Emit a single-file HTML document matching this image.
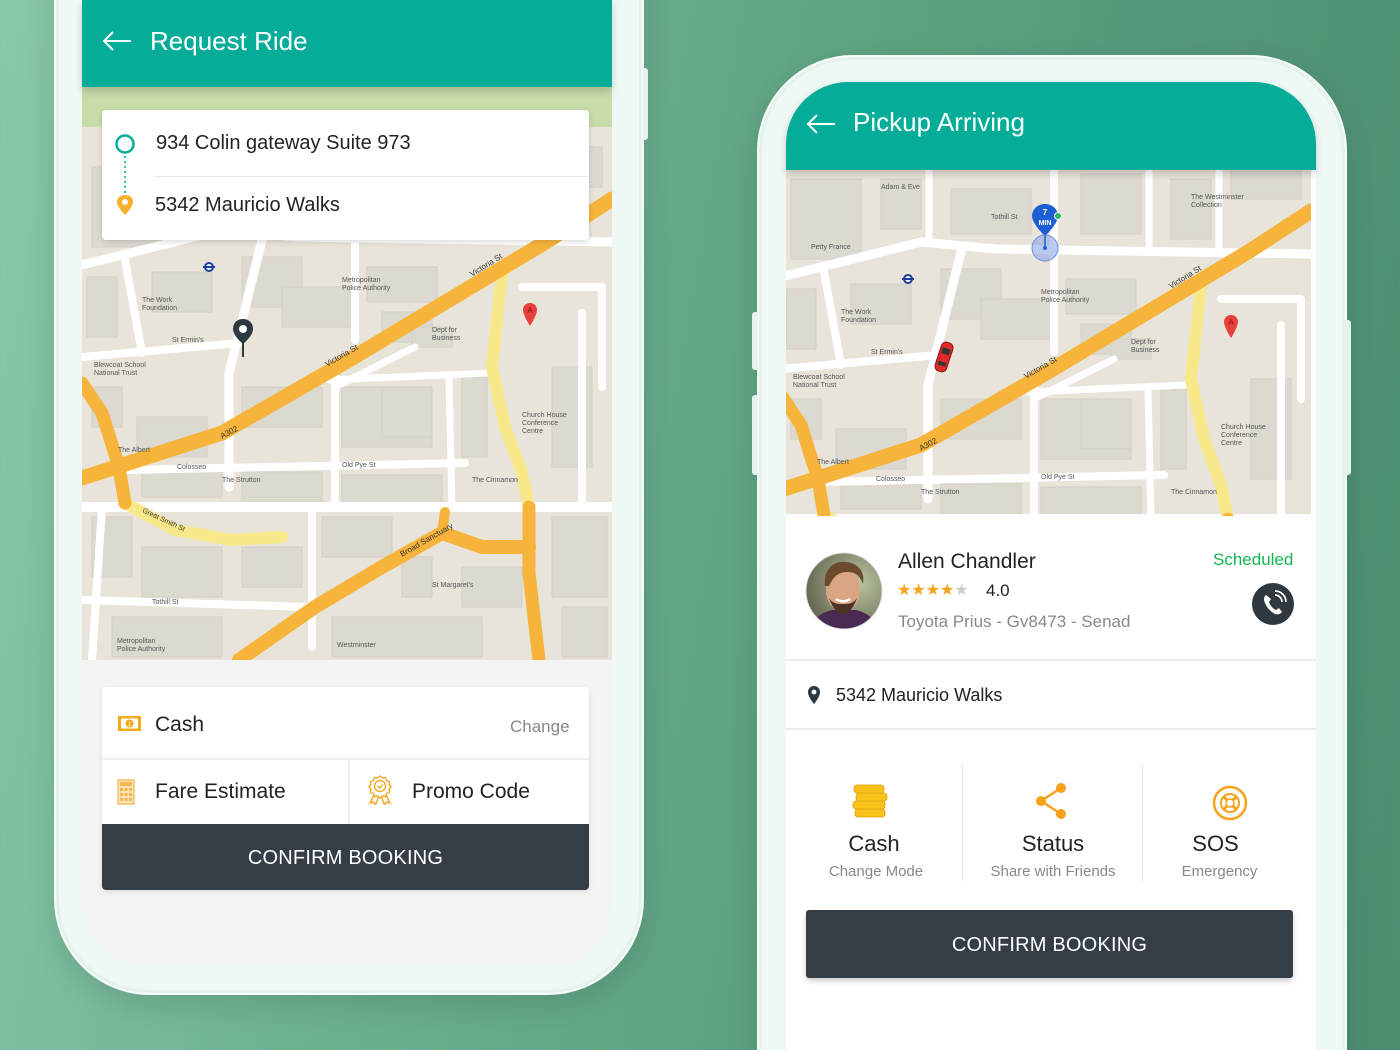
<!DOCTYPE html>
<html style="width:1400px;height:1050px;overflow:hidden"><head><meta charset="utf-8">
<style>
*{margin:0;padding:0;box-sizing:border-box}
html,body{width:1400px;height:1050px;overflow:hidden}
body{position:relative;font-family:"Liberation Sans",sans-serif;
background:linear-gradient(100deg,#8ac8ab 0%,#6db191 30%,#5ea383 55%,#54977a 75%,#4c8d70 100%);}
.abs{position:absolute}
.shell{position:absolute;background:#eef8f4;border:2px solid #f6fcf9;box-shadow:0 0 0 3px #e3f3ec inset,0 10px 30px rgba(0,0,0,.12)}
.hdr{position:absolute;background:#05ad99;color:#fff;font-size:26px;box-shadow:0 4px 8px rgba(0,0,0,.18)}
.t{position:absolute;white-space:nowrap}
.btn{position:absolute;background:#353e46;color:#fff;font-size:20px;text-align:center;letter-spacing:.2px}
</style></head><body>

<svg width="0" height="0" style="position:absolute">
<defs>
<symbol id="map" viewBox="0 0 530 573">
<rect width="530" height="573" fill="#e8e4da"/>
<rect width="530" height="40" fill="#c8dcaa"/>
<g fill="#dcd9d1" stroke="#d2cec6" stroke-width="1">
<rect x="5" y="190" width="30" height="60"/><rect x="70" y="185" width="60" height="40"/><rect x="160" y="170" width="60" height="50"/>
<rect x="200" y="200" width="70" height="40"/><rect x="285" y="180" width="70" height="35"/><rect x="300" y="225" width="50" height="30"/>
<rect x="10" y="300" width="30" height="40"/><rect x="55" y="330" width="70" height="40"/><rect x="160" y="300" width="80" height="40"/>
<rect x="260" y="300" width="90" height="60"/><rect x="380" y="290" width="25" height="80"/><rect x="470" y="280" width="40" height="100"/>
<rect x="60" y="385" width="80" height="25"/><rect x="160" y="385" width="80" height="30"/><rect x="260" y="388" width="100" height="28"/>
<rect x="10" y="430" width="40" height="60"/><rect x="60" y="460" width="80" height="50"/><rect x="160" y="460" width="60" height="40"/>
<rect x="240" y="430" width="70" height="40"/><rect x="320" y="470" width="30" height="40"/><rect x="380" y="480" width="60" height="40"/>
<rect x="470" y="430" width="55" height="80"/><rect x="30" y="530" width="110" height="40"/><rect x="250" y="530" width="150" height="40"/>
<rect x="480" y="520" width="45" height="50"/><rect x="100" y="80" width="40" height="50"/><rect x="170" y="90" width="80" height="45"/>
<rect x="300" y="75" width="60" height="60"/><rect x="390" y="80" width="40" height="60"/><rect x="450" y="60" width="70" height="40"/>
<rect x="10" y="80" width="70" height="80"/><rect x="300" y="300" width="50" height="50"/><rect x="330" y="240" width="40" height="20"/>
</g>
<g fill="none" stroke="#fff" stroke-linecap="round" stroke-linejoin="round">
<path d="M0 420H530" stroke-width="10"/>
<path d="M43 383L383 376" stroke-width="8"/>
<path d="M180 153L147 286L147 400" stroke-width="9"/>
<path d="M0 270L157 256" stroke-width="8"/>
<path d="M253 280L253 420" stroke-width="8"/>
<path d="M43 173L60 266" stroke-width="8"/>
<path d="M253 300L333 260" stroke-width="7"/>
<path d="M367 293L370 420" stroke-width="7"/>
<path d="M247 293L407 286" stroke-width="7"/>
<path d="M500 226L500 413" stroke-width="8"/>
<path d="M0 513L227 520" stroke-width="8"/>
<path d="M230 420L230 560" stroke-width="8"/>
<path d="M20 420L10 573" stroke-width="8"/>
<path d="M273 71L273 253" stroke-width="8"/>
<path d="M0 178L140 143L215 150L530 155" stroke-width="9"/>
<path d="M148 71L148 140" stroke-width="7"/><path d="M368 71L368 150" stroke-width="7"/><path d="M438 71L438 155" stroke-width="7"/>
<path d="M440 200L520 200L520 300" stroke-width="8"/>
</g>
<g fill="none" stroke-linecap="round" stroke-linejoin="round">
<path d="M43 416L93 443L150 453L200 450" stroke="#f7e98a" stroke-width="12"/>
<path d="M420 186L410 280L423 340L440 386L447 420" stroke="#f7e98a" stroke-width="12"/>
<path d="M0 296L20 326L37 380L43 416" stroke="#f6b43a" stroke-width="13"/>
<path d="M0 391L140 346L267 273L367 213L467 153L530 112" stroke="#f6b43a" stroke-width="15"/>
<path d="M447 420L447 486L457 573" stroke="#f6b43a" stroke-width="13"/>
<path d="M157 573L233 520L300 480L360 446L400 460L447 460" stroke="#f6b43a" stroke-width="14"/>
<path d="M360 446L363 425" stroke="#f6b43a" stroke-width="10"/>
</g>
<g font-family="Liberation Sans,sans-serif" font-size="7" fill="#555">
<text x="245" y="280" transform="rotate(-30 245 280)" font-size="8" fill="#333">Victoria St</text>
<text x="140" y="352" transform="rotate(-28 140 352)" font-size="8" fill="#333">A302</text>
<text x="390" y="190" transform="rotate(-32 390 190)" font-size="8" fill="#333">Victoria St</text>
<text x="260" y="380">Old Pye St</text><text x="60" y="215">The Work</text><text x="60" y="223">Foundation</text>
<text x="90" y="255">St Ermin's</text><text x="12" y="280">Blewcoat School</text><text x="12" y="288">National Trust</text>
<text x="260" y="195">Metropolitan</text><text x="260" y="203">Police Authority</text><text x="350" y="245">Dept for</text><text x="350" y="253">Business</text>
<text x="440" y="330">Church House</text><text x="440" y="338">Conference</text><text x="440" y="346">Centre</text>
<text x="390" y="395">The Cinnamon</text><text x="36" y="365">The Albert</text><text x="95" y="382">Colosseo</text>
<text x="140" y="395">The Strutton</text><text x="70" y="517">Tothill St</text><text x="350" y="500">St Margaret's</text>
<text x="35" y="556">Metropolitan</text><text x="35" y="564">Police Authority</text><text x="255" y="560">Westminster</text>
<text x="320" y="470" transform="rotate(-30 320 470)" font-size="8" fill="#333">Broad Sanctuary</text>
<text x="60" y="425" transform="rotate(25 60 425)" fill="#333">Great Smith St</text>
<text x="100" y="90">Adam &amp; Eve</text><text x="30" y="150">Petty France</text><text x="210" y="120">Tothill St</text>
<text x="410" y="100">The Westminster</text><text x="410" y="108">Collection</text>
</g>
<circle cx="127" cy="180" r="4" fill="#fff" stroke="#1b3fa0" stroke-width="2"/><path d="M121 180h12" stroke="#1b3fa0" stroke-width="2"/>
</symbol>
</defs>
</svg>

<!-- LEFT PHONE -->
<div class="shell" style="left:54px;top:-120px;width:590px;height:1115px;border-radius:0 0 96px 96px"></div>
<div class="abs" style="left:643px;top:68px;width:5px;height:72px;background:#e6f4ee;border-radius:0 3px 3px 0"></div>
<div class="abs" style="left:82px;top:-10px;width:530px;height:975px;background:#f4f4f4;border-radius:0 0 62px 62px;overflow:hidden">
  <svg class="abs" style="left:0;top:97px" width="530" height="573"><use href="#map"/></svg>
  <svg class="abs" style="left:150px;top:328px" width="22" height="40" viewBox="0 0 22 40"><path d="M11 1C5 1 1 5 1 11c0 7 10 15 10 15s10-8 10-15C21 5 17 1 11 1z" fill="#2c3a40"/><circle cx="11" cy="11" r="4" fill="#fff"/><path d="M11 25v14" stroke="#2c3a40" stroke-width="2"/></svg>
  <svg class="abs" style="left:440px;top:312px" width="16" height="26" viewBox="0 0 16 26"><path d="M8 1C4 1 1 4 1 8c0 5 7 16 7 16s7-11 7-16c0-4-3-7-7-7z" fill="#e8403a"/><text x="8" y="11" font-size="8" text-anchor="middle" fill="#7a1010" font-family="Liberation Sans">A</text></svg>
</div>
<div class="hdr" style="left:82px;top:0;width:530px;height:87px">
  <svg class="abs" style="left:20px;top:31px" width="30" height="20" viewBox="0 0 30 20"><path d="M29 10H2M11 1L2 10l9 9" fill="none" stroke="#fff" stroke-width="2"/></svg>
  <div class="t" style="left:68px;top:26px">Request Ride</div>
</div>
<div class="abs" style="left:102px;top:110px;width:487px;height:130px;background:#fff;border-radius:4px;box-shadow:0 2px 6px rgba(0,0,0,.15)">
  <svg class="abs" style="left:12px;top:22px" width="24" height="88" viewBox="0 0 24 88"><circle cx="11" cy="12" r="8.5" fill="none" stroke="#06ae9a" stroke-width="2.5"/><path d="M11 24V62" stroke="#06ae9a" stroke-width="1.6" stroke-dasharray="2 3"/><path d="M11 63c-5 0-8 3-8 7 0 5 8 13 8 13s8-8 8-13c0-4-3-7-8-7z" fill="#f7b12c"/><circle cx="11" cy="70" r="3" fill="#fff"/></svg>
  <div class="t" style="left:54px;top:22px;font-size:20px;color:#222">934 Colin gateway Suite 973</div>
  <div class="abs" style="left:52px;top:66px;width:435px;height:1px;background:#e6e6e6"></div>
  <div class="t" style="left:53px;top:84px;font-size:20px;color:#222">5342 Mauricio Walks</div>
</div>
<div class="abs" style="left:102px;top:687px;width:487px;height:203px;background:#fff;border-radius:4px;box-shadow:0 2px 6px rgba(0,0,0,.1);overflow:hidden">
  <svg class="abs" style="left:15px;top:28px" width="25" height="17" viewBox="0 0 25 17"><rect x="1" y="1" width="23" height="15" fill="#f7a91c"/><rect x="4" y="3.5" width="17" height="10" fill="#fff" rx="1"/><circle cx="12.5" cy="8.5" r="4" fill="#f7a91c"/><text x="12.5" y="11" font-size="6" text-anchor="middle" fill="#fff" font-family="Liberation Sans">1</text></svg>
  <div class="t" style="left:53px;top:26px;font-size:21px;color:#222">Cash</div>
  <div class="t" style="left:408px;top:30px;font-size:17px;color:#888">Change</div>
  <div class="abs" style="left:0;top:71px;width:487px;height:2px;background:#efefef"></div>
  <svg class="abs" style="left:15px;top:92px" width="18" height="26" viewBox="0 0 18 26"><rect x="1" y="1" width="16" height="24" fill="#fbe3b4" stroke="#f4b650" stroke-width="1.2"/><rect x="3" y="3" width="12" height="4" fill="#f4b650"/><g fill="#f4b650"><rect x="3" y="9" width="3" height="3"/><rect x="7.5" y="9" width="3" height="3"/><rect x="12" y="9" width="3" height="3"/><rect x="3" y="14" width="3" height="3"/><rect x="7.5" y="14" width="3" height="3"/><rect x="12" y="14" width="3" height="3"/><rect x="3" y="19" width="3" height="3"/><rect x="7.5" y="19" width="3" height="3"/><rect x="12" y="19" width="3" height="3"/></g></svg>
  <div class="t" style="left:53px;top:93px;font-size:21px;color:#222">Fare Estimate</div>
  <div class="abs" style="left:246px;top:73px;width:2px;height:64px;background:#efefef"></div>
  <svg class="abs" style="left:265px;top:88px" width="26" height="30" viewBox="0 0 26 30"><g fill="none" stroke="#f5a623" stroke-width="1.4"><path d="M13 1l2.5 2 3-.5 1 3 3 1-.5 3 2 2.5-2 2.5.5 3-3 1-1 3-3-.5L13 23l-2.5-2-3 .5-1-3-3-1 .5-3-2-2.5 2-2.5-.5-3 3-1 1-3 3 .5z"/><circle cx="13" cy="11" r="5.5"/><path d="M10.5 11l2 2 3.5-3.5"/><path d="M7 20l-4 8 3.5-1 2 3 3-8M19 20l4 8-3.5-1-2 3-3-8"/></g></svg>
  <div class="t" style="left:310px;top:93px;font-size:21px;color:#222">Promo Code</div>
  <div class="btn" style="left:0;top:137px;width:487px;height:66px;line-height:68px">CONFIRM BOOKING</div>
</div>

<!-- RIGHT PHONE -->
<div class="shell" style="left:757px;top:55px;width:590px;height:1040px;border-radius:96px 96px 0 0"></div>
<div class="abs" style="left:752px;top:312px;width:6px;height:58px;background:#e6f4ee;border-radius:3px 0 0 3px"></div>
<div class="abs" style="left:752px;top:395px;width:6px;height:80px;background:#e6f4ee;border-radius:3px 0 0 3px"></div>
<div class="abs" style="left:1345px;top:320px;width:6px;height:155px;background:#e6f4ee;border-radius:0 3px 3px 0"></div>
<div class="abs" style="left:786px;top:82px;width:530px;height:1000px;background:#fff;border-radius:62px 62px 0 0;overflow:hidden">
  <svg class="abs" style="left:0;top:88px" width="530" height="346" viewBox="5 71 530 346" preserveAspectRatio="none"><use href="#map" width="530" height="573"/></svg>
  <svg class="abs" style="left:240px;top:120px" width="40" height="66" viewBox="0 0 40 66"><circle cx="19" cy="46" r="13" fill="#8aa6e6" fill-opacity=".6" stroke="#6f8fdc"/><path d="M19 2C12 2 6 7 6 14c0 8 13 20 13 20s13-12 13-20C32 7 26 2 19 2z" fill="#1e5fd6"/><text x="19" y="13" font-size="8" text-anchor="middle" fill="#fff" font-family="Liberation Sans" font-weight="bold">7</text><text x="19" y="23" font-size="7" text-anchor="middle" fill="#fff" font-family="Liberation Sans" font-weight="bold">MIN</text><path d="M19 34v12" stroke="#1e5fd6" stroke-width="1.5"/><circle cx="19" cy="46" r="2" fill="#1e5fd6"/><circle cx="32" cy="14" r="3.5" fill="#2db36a" stroke="#fff"/></svg>
  <svg class="abs" style="left:148px;top:258px" width="20" height="34" viewBox="0 0 20 34"><g transform="rotate(18 10 17)"><rect x="4" y="2" width="12" height="30" rx="5" fill="#e02a2a" stroke="#8a1010"/><rect x="6" y="8" width="8" height="6" fill="#333"/><rect x="6" y="22" width="8" height="4" fill="#333"/></g></svg>
  <svg class="abs" style="left:437px;top:232px" width="16" height="26" viewBox="0 0 16 26"><path d="M8 1C4 1 1 4 1 8c0 5 7 16 7 16s7-11 7-16c0-4-3-7-7-7z" fill="#e8403a"/><text x="8" y="11" font-size="8" text-anchor="middle" fill="#7a1010" font-family="Liberation Sans">A</text></svg>

  <svg class="abs" style="left:19px;top:470px" width="78" height="78" viewBox="0 0 78 78"><defs><clipPath id="cc"><circle cx="39" cy="39" r="38"/></clipPath><radialGradient id="bg1" cx=".7" cy=".4" r=".8"><stop offset="0" stop-color="#b8c4a0"/><stop offset="1" stop-color="#5c5a48"/></radialGradient></defs><g clip-path="url(#cc)"><rect width="78" height="78" fill="url(#bg1)"/><path d="M5 78c4-14 14-18 22-20h24c8 2 18 6 22 20z" fill="#4a2a52"/><ellipse cx="38" cy="38" rx="17" ry="22" fill="#d9a582"/><path d="M20 34c-2-18 10-26 22-24 12 2 18 10 16 22-3-8-7-12-16-12-10 0-14 6-18 14z" fill="#6b4a2e"/><path d="M24 46c4 12 10 16 14 16s10-4 14-16c-4 6-8 6-14 6s-10 0-14-6z" fill="#4b3222"/><path d="M31 47c4 3 10 3 14 0" stroke="#fff" stroke-width="2.5" fill="none"/></g><circle cx="39" cy="39" r="38" fill="none" stroke="#ddd"/></svg>
  <div class="t" style="left:112px;top:468px;font-size:21px;color:#222">Allen Chandler</div>
  <div class="t" style="left:111px;top:498px;font-size:16px;letter-spacing:0px;color:#f7a21b">★★★★<span style="color:#ccc">★</span></div>
  <div class="t" style="left:200px;top:499px;font-size:17px;color:#222">4.0</div>
  <div class="t" style="left:112px;top:530px;font-size:17px;color:#888">Toyota Prius - Gv8473 - Senad</div>
  <div class="t" style="left:427px;top:468px;font-size:17px;color:#14b552">Scheduled</div>
  <svg class="abs" style="left:466px;top:501px" width="42" height="42" viewBox="0 0 42 42"><circle cx="21" cy="21" r="21" fill="#2f393f"/><path d="M14 12c-2 2-3 4-1 8 2 5 6 9 10 11 3 1 5 0 7-2l-3-4-3 2c-3-1-6-5-7-8l2-3z" fill="#fff"/><path d="M23 12a7 7 0 0 1 7 7M23 8a11 11 0 0 1 11 11" stroke="#fff" stroke-width="1.7" fill="none"/></svg>
  <div class="abs" style="left:0;top:577px;width:530px;height:2px;background:#ebebeb"></div>
  <svg class="abs" style="left:21px;top:603px" width="14" height="20" viewBox="0 0 14 20"><path d="M7 1C3.5 1 1 3.5 1 7c0 5 6 12 6 12s6-7 6-12c0-3.5-2.5-6-6-6z" fill="#2c3a40"/><circle cx="7" cy="7" r="2.4" fill="#fff"/></svg>
  <div class="t" style="left:50px;top:603px;font-size:18px;color:#222">5342 Mauricio Walks</div>
  <div class="abs" style="left:0;top:646px;width:530px;height:2px;background:#ebebeb"></div>
  <div class="abs" style="left:176px;top:683px;width:1px;height:116px;background:#e6e6e6"></div>
  <div class="abs" style="left:356px;top:683px;width:1px;height:116px;background:#e6e6e6"></div>
  <svg class="abs" style="left:66px;top:701px" width="38" height="36" viewBox="0 0 38 36"><g fill="#f8c21a" stroke="#e0a008" stroke-width=".8"><rect x="3" y="26" width="30" height="8" rx="3"/><rect x="1" y="18" width="32" height="8" rx="3"/><rect x="4" y="10" width="31" height="8" rx="3"/><rect x="2" y="2" width="30" height="8" rx="3"/></g></svg>
  <div class="t" style="left:0;width:176px;text-align:center;top:749px;font-size:22px;color:#222">Cash</div>
  <div class="t" style="left:0;width:180px;text-align:center;top:781px;font-size:15px;color:#888">Change Mode</div>
  <svg class="abs" style="left:248px;top:700px" width="36" height="38" viewBox="0 0 36 38"><g fill="#f7a21b"><circle cx="27" cy="6" r="5"/><circle cx="7" cy="19" r="5"/><circle cx="27" cy="32" r="5"/></g><path d="M27 6L7 19l20 13" stroke="#f7a21b" stroke-width="2.5" fill="none"/></svg>
  <div class="t" style="left:177px;width:180px;text-align:center;top:749px;font-size:22px;color:#222">Status</div>
  <div class="t" style="left:177px;width:180px;text-align:center;top:781px;font-size:15px;color:#888">Share with Friends</div>
  <svg class="abs" style="left:426px;top:703px" width="36" height="36" viewBox="0 0 36 36"><g fill="none" stroke="#f7a21b"><circle cx="18" cy="18" r="16" stroke-width="2.5"/><circle cx="18" cy="18" r="9" stroke-width="2"/><circle cx="18" cy="18" r="4" stroke-width="1.5"/></g><g stroke="#f7a21b" stroke-width="3"><path d="M12 12l3 3M24 12l-3 3M12 24l3-3M24 24l-3-3"/></g></svg>
  <div class="t" style="left:357px;width:173px;text-align:center;top:749px;font-size:22px;color:#222;padding-right:28px">SOS</div>
  <div class="t" style="left:357px;width:173px;text-align:center;top:781px;font-size:15px;color:#888;padding-right:20px">Emergency</div>
</div>
<div class="hdr" style="left:786px;top:82px;width:530px;height:88px;border-radius:62px 62px 0 0">
  <svg class="abs" style="left:20px;top:32px" width="30" height="20" viewBox="0 0 30 20"><path d="M29 10H2M11 1L2 10l9 9" fill="none" stroke="#fff" stroke-width="2"/></svg>
  <div class="t" style="left:67px;top:25px">Pickup Arriving</div>
</div>
<div class="btn" style="left:806px;top:910px;width:487px;height:68px;line-height:70px;border-radius:3px;box-shadow:0 3px 6px rgba(0,0,0,.2)">CONFIRM BOOKING</div>
</body></html>
